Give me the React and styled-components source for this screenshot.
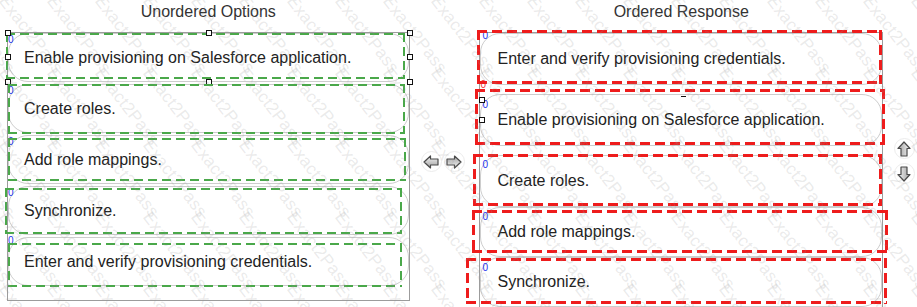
import React from "react";
import styled, { createGlobalStyle } from "styled-components";

const Global = createGlobalStyle`
  html, body { margin: 0; padding: 0; background: #fff; }
  body { font-family: "Liberation Sans", Arial, sans-serif; }
`;

const Page = styled.div`
  position: relative;
  width: 917px;
  height: 307px;
  overflow: hidden;
  display: flex;
  align-items: flex-start;
  background: #fff;
`;

const Column = styled.div`
  display: flex;
  flex-direction: column;
  width: ${(p) => p.$w}px;
  margin-left: ${(p) => p.$ml || 0}px;
`;

const Title = styled.div`
  height: 24px;
  line-height: 24px;
  margin-bottom: ${(p) => p.$mb}px;
  text-align: center;
  font-size: 16px;
  color: #333;
`;

const Panel = styled.div`
  box-sizing: border-box;
  border: 1px solid #9c9c9c;
  border-bottom: ${(p) => (p.$open ? "none" : "1px solid #9c9c9c")};
  height: ${(p) => p.$h}px;
  display: flex;
  flex-direction: column;
  gap: ${(p) => p.$gap || 0}px;
`;

const Item = styled.div`
  position: relative;
  box-sizing: border-box;
  height: ${(p) => p.$h}px;
  margin-top: ${(p) => p.$mt || 0}px;
  border: 1px solid #cdcdcd;
  border-radius: 20px;
  display: flex;
  align-items: center;
  padding-left: ${(p) => p.$pl}px;
  font-size: 16px;
  color: #222;
  flex-shrink: 0;
`;

const dash = (c, w, d, g) => `
  background:
    repeating-linear-gradient(90deg, ${c} 0 ${d}px, transparent ${d}px ${d + g}px) top left / 100% ${w}px no-repeat,
    repeating-linear-gradient(90deg, ${c} 0 ${d}px, transparent ${d}px ${d + g}px) bottom left / 100% ${w}px no-repeat,
    repeating-linear-gradient(180deg, ${c} 0 ${d}px, transparent ${d}px ${d + g}px) top left / ${w}px 100% no-repeat,
    repeating-linear-gradient(180deg, ${c} 0 ${d}px, transparent ${d}px ${d + g}px) top right / ${w}px 100% no-repeat;
`;

const Dashed = styled.div`
  position: absolute;
  pointer-events: none;
  top: ${(p) => p.$o[0]}px;
  right: ${(p) => p.$o[1]}px;
  bottom: ${(p) => p.$o[2]}px;
  left: ${(p) => p.$o[3]}px;
  ${(p) => (p.$red ? dash("#ee1c1c", 3, 10, 5) : dash("#4aa84a", 2, 9, 5))}
`;

const Zero = styled.span`
  position: absolute;
  top: ${(p) => p.$t}px;
  left: ${(p) => p.$l}px;
  font-size: 10px;
  line-height: 10px;
  color: ${(p) => (p.$red ? "#e33" : "#2233ee")};
`;

const Handle = styled.span`
  position: absolute;
  top: ${(p) => p.$t}px;
  left: ${(p) => p.$l}px;
  width: 4px;
  height: 4px;
  background: #fff;
  border: 1px solid #111;
`;

const Tick = styled.span`
  position: absolute;
  top: ${(p) => p.$t}px;
  left: ${(p) => p.$l}px;
  width: 5px;
  height: 1px;
  background: #111;
`;

const ArrowCol = styled.div`
  display: flex;
  flex-direction: ${(p) => p.$dir};
  align-items: center;
  align-self: flex-start;
  gap: ${(p) => p.$gap}px;
  margin-top: ${(p) => p.$mt}px;
  padding-left: ${(p) => p.$pl}px;
  width: ${(p) => p.$w}px;
  box-sizing: border-box;
`;

const ArrowBtn = styled.div`
  width: 21px;
  height: 21px;
  border-radius: 50%;
  border: 1px solid #ececec;
  display: flex;
  align-items: center;
  justify-content: center;
  box-sizing: border-box;
`;

const Watermark = styled.div`
  position: absolute;
  inset: 0;
  pointer-events: none;
  overflow: hidden;
`;

const Mark = styled.span`
  position: absolute;
  font-size: 17px;
  font-family: "Liberation Sans", Arial, sans-serif;
  color: rgba(150, 150, 150, 0.2);
  transform: rotate(52deg);
  transform-origin: left top;
  white-space: nowrap;
  letter-spacing: 0.3px;
`;

const Arrow = ({ rot }) => (
  <svg width="16" height="14" viewBox="0 0 16 14" style={{ transform: `rotate(${rot}deg)` }}>
    <defs>
      <linearGradient id={`g${rot}`} x1="0" y1="0" x2="0" y2="1">
        <stop offset="0" stopColor="#f4f4f4" />
        <stop offset="1" stopColor="#a0a0a0" />
      </linearGradient>
    </defs>
    <polygon
      points="1,7 7.5,1 7.5,4 15,4 15,10 7.5,10 7.5,13"
      fill={`url(#g${rot})`}
      stroke="#4a4a4a"
      strokeWidth="1.2"
      strokeLinejoin="round"
    />
  </svg>
);

const leftItems = [
  { text: "Enable provisioning on Salesforce application.", o: [-1, 3, 2, -3], z: 1, handles: true },
  { text: "Create roles.", o: [-1, 3, -2, -1], z: 1 },
  { text: "Add role mappings.", o: [2, 2, 2, -1], z: 1 },
  { text: "Synchronize.", o: [1, 6, 0, -4], z: 1 },
  { text: "Enter and verify provisioning credentials.", o: [5, 6, -2, -1], z: -2 },
];

const rightItems = [
  { text: "Enter and verify provisioning credentials.", h: 52, mt: 0, o: [-4, -1, 0, -4], z: -3 },
  { text: "Enable provisioning on Salesforce application.", h: 52, mt: 9, o: [-6, -4, 0, -6], z: 5, handles: true },
  { text: "Create roles.", h: 52, mt: 9, o: [-2, -1, 0, -8], z: 4 },
  { text: "Add role mappings.", h: 50, mt: 0, o: [2, -7, 3, -9], z: 4 },
  { text: "Synchronize.", h: 50, mt: 0, o: [0, -6, 2, -15], z: 5 },
];

const marks = [];
for (let r = -2; r < 5; r++) {
  for (let c = -3; c < 20; c++) {
    marks.push({ x: c * 48 + 10, y: r * 72 - 8 });
  }
}

export default function App() {
  return (
    <>
      <Global />
      <Page>
        <Column $w={403} $ml={7}>
          <Title $mb={8}>Unordered Options</Title>
          <Panel $h={269} $gap={2}>
            {leftItems.map((it, i) => (
              <Item key={i} $h={49} $pl={15}>
                {it.text}
                <Zero $t={it.z} $l={-1}>0</Zero>
                <Dashed $o={it.o} />
                {it.handles && (
                  <>
                    <Handle $t={-4} $l={-4} />
                    <Handle $t={-4} $l={197} />
                    <Handle $t={-4} $l={398} />
                    <Handle $t={20} $l={-4} />
                    <Handle $t={20} $l={398} />
                    <Handle $t={45} $l={-4} />
                    <Handle $t={45} $l={197} />
                    <Handle $t={45} $l={398} />
                  </>
                )}
              </Item>
            ))}
          </Panel>
        </Column>
        <ArrowCol $dir="row" $gap={2} $mt={151} $pl={11} $w={70}>
          <ArrowBtn>
            <Arrow rot={0} />
          </ArrowBtn>
          <ArrowBtn>
            <Arrow rot={180} />
          </ArrowBtn>
        </ArrowCol>
        <Column $w={404}>
          <Title $mb={8}>Ordered Response</Title>
          <Panel $h={280} $open>
            {rightItems.map((it, i) => (
              <Item key={i} $h={it.h} $mt={it.mt} $pl={16}>
                {it.text}
                <Zero $t={it.z} $l={1}>0</Zero>
                {i === 0 && (
                  <Zero $t={46} $l={-1} $red>
                    0
                  </Zero>
                )}
                <Dashed $o={it.o} $red />
                {it.handles && (
                  <>
                    <Handle $t={2} $l={-2} />
                    <Handle $t={22} $l={-2} />
                    <Tick $t={1} $l={200} />
                  </>
                )}
              </Item>
            ))}
          </Panel>
        </Column>
        <ArrowCol $dir="column" $gap={4} $mt={138} $pl={8} $w={34}>
          <ArrowBtn>
            <Arrow rot={90} />
          </ArrowBtn>
          <ArrowBtn>
            <Arrow rot={-90} />
          </ArrowBtn>
        </ArrowCol>
        <Watermark>
          {marks.map((m, i) => (
            <Mark key={i} style={{ left: m.x, top: m.y }}>
              Exact2Pass
            </Mark>
          ))}
        </Watermark>
      </Page>
    </>
  );
}
